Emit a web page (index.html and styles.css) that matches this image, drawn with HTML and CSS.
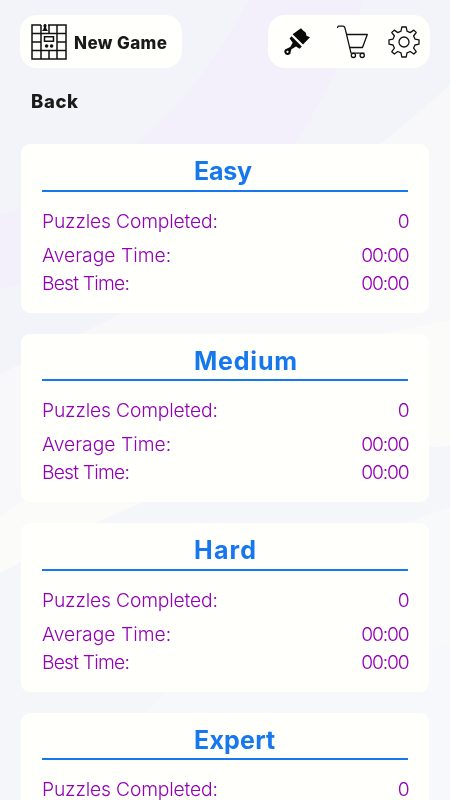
FILE: index.html
```html
<!DOCTYPE html>
<html lang="en">
<head>
    <meta charset="UTF-8">
    <meta name="viewport" content="width=device-width, initial-scale=1.0">
    <title>Statistics</title>
    <link rel="stylesheet" href="styles.css">
</head>
<body>
    <svg class="background" viewBox="0 0 450 800" preserveAspectRatio="none" aria-hidden="true">
        <rect width="450" height="800" fill="#f3f4f9"/>
        <path d="M248 0H363Q341 75 295 143Q190 260 0 289V215Q75 190 135 144Q205 85 248 0Z" fill="#f3f0fb"/>
        <path d="M450 85Q270 245 80 334Q40 355 0 374V800H450Z" fill="#f8f8fa"/>
        <path d="M450 320L385 334Q180 420 20 503L0 517V800H450Z" fill="#fbfcf9"/>
        <path d="M450 446L430 447Q280 460 143 502L95 523L0 573V800H450Z" fill="#f5f6fa"/>
        <path d="M450 507L405 523Q250 575 165 692L148 712L80 800H450Z" fill="#f7f8fc"/>
        <path d="M450 507L405 523Q300 570 290 670L450 645Z" fill="#f8f9fb"/>
    </svg>

    <header class="top-bar">
        <button class="new-game">
            <svg width="36" height="36" viewBox="0 0 36 36" aria-hidden="true">
                <g fill="none" stroke="#111" stroke-width="1.5">
                    <path d="M10 1H1V35H35V1H17M1 9.5H35M1 18H10M26 18H35M1 26.5H35M10 1V35M26 1V35M18 1V9.5M18 26.5V35"/>
                    <path d="M13.5 12.7H22.5V17.2H13.5Z"/>
                </g>
                <path d="M14 0A1.7 1.7 0 0 1 15 3L15.5 5L17 7H11L12.5 5L13 3A1.7 1.7 0 0 1 14 0Z" fill="#111"/>
                <circle cx="15.6" cy="22" r="1.8" fill="#111"/>
                <circle cx="20.6" cy="22" r="1.8" fill="#111"/>
            </svg>
            <span>New Game</span>
        </button>
        <nav class="tools">
            <svg class="brush" width="28" height="28" viewBox="0 0 28 28" aria-label="Themes">
                <path d="M9.6 6.2L18 0.2L20.4 2.7L22.7 4.5L23.5 7.8L27 9.2L20 16.5Z" fill="#0a0a0a"/>
                <path d="M8.5 8.3L18.8 18.4L16.6 20.7L13 18.4L8.4 21.2L7.7 23.5A3.2 3.2 0 1 1 3.6 20.8L7.2 19L9.7 14.8L6.6 10.4Z" fill="#0a0a0a"/>
                <circle cx="4.5" cy="23.8" r="1.1" fill="#fffffc"/>
            </svg>
            <svg class="cart" width="34" height="34" viewBox="0 0 34 34" aria-label="Shop">
                <g fill="none" stroke="#111" stroke-width="1.3" stroke-linecap="round" stroke-linejoin="round">
                    <path d="M1.5 2.5L2.2 1.2H7Q8.4 1.2 9 3.2L15 28.2H28"/>
                    <path d="M11.2 9.5H31.3L26.5 22.5H14"/>
                    <circle cx="17.4" cy="30.4" r="2.1"/>
                    <circle cx="26.2" cy="30.4" r="2.1"/>
                </g>
            </svg>
            <svg class="gear" width="32" height="32" viewBox="0 0 32 32" aria-label="Settings">
                <g fill="none" stroke="#111" stroke-width="1.3" stroke-linejoin="round">
                    <path d="M13.8 1H18.2L19 5.2L22.2 6.6L25.8 4.1L28.2 6.5L25.6 10L27 13.1L31 13.8V18.2L27 19L25.6 22.1L28.2 25.7L25.8 28L22.2 25.5L19 26.8L18.2 31H13.8L13 26.8L9.8 25.5L6.3 28L3.8 25.7L6.4 22.1L5 19L1 18.2V13.8L5 13.1L6.4 10L3.8 6.5L6.3 4.1L9.8 6.6L13 5.2Z"/>
                    <circle cx="16" cy="16" r="5"/>
                </g>
            </svg>
        </nav>
    </header>

    <a class="back">Back</a>

    <main class="stats">
        <section class="card">
            <h2 class="easy">Easy</h2>
            <p class="row completed"><span>Puzzles Completed:</span><span class="value">0</span></p>
            <p class="row average"><span>Average Time:</span><span class="value">00:00</span></p>
            <p class="row best"><span>Best Time:</span><span class="value">00:00</span></p>
        </section>
        <section class="card">
            <h2>Medium</h2>
            <p class="row completed"><span>Puzzles Completed:</span><span class="value">0</span></p>
            <p class="row average"><span>Average Time:</span><span class="value">00:00</span></p>
            <p class="row best"><span>Best Time:</span><span class="value">00:00</span></p>
        </section>
        <section class="card">
            <h2 class="hard">Hard</h2>
            <p class="row completed"><span>Puzzles Completed:</span><span class="value">0</span></p>
            <p class="row average"><span>Average Time:</span><span class="value">00:00</span></p>
            <p class="row best"><span>Best Time:</span><span class="value">00:00</span></p>
        </section>
        <section class="card">
            <h2 class="expert">Expert</h2>
            <p class="row completed"><span>Puzzles Completed:</span><span class="value">0</span></p>
        </section>
    </main>
</body>
</html>
```

FILE: styles.css
```css
* {
    box-sizing: border-box;
}

body {
    margin: 0;
    height: 100vh;
    overflow: hidden;
    display: flex;
    flex-direction: column;
    font-family: Inter, "Liberation Sans", sans-serif;
    color: #1a1a1a;
}

.background {
    position: fixed;
    inset: 0;
    width: 100%;
    height: 100%;
    z-index: -1;
}

.top-bar {
    display: flex;
    justify-content: space-between;
    padding: 15px 20px 0;
}

.new-game,
.tools {
    display: flex;
    align-items: center;
    width: 162px;
    height: 53px;
    border: none;
    border-radius: 17px;
    background: #fffffc;
}

.new-game {
    gap: 7px;
    padding: 0 0 0 11px;
    font-family: inherit;
    font-size: 17px;
    font-weight: 800;
    color: #1a1a1a;
    white-space: nowrap;
}

.new-game span {
    padding-top: 3px;
    letter-spacing: 0.4px;
}

.tools {
    padding-left: 15px;
}

.cart {
    margin-left: 25px;
}

.gear {
    margin-left: 18px;
}

.back {
    margin: 19px 0 0 31px;
    height: 29px;
    line-height: 29px;
    font-size: 18.5px;
    font-weight: 800;
    letter-spacing: 0.6px;
}

.stats {
    flex: 1;
    min-height: 0;
    overflow: hidden;
    display: flex;
    flex-direction: column;
    gap: 21px;
    padding: 28px 21px 0;
}

.card {
    flex: none;
    height: 168.6px;
    padding: 8px 21px 0;
    border-radius: 9px;
    background: #fffffc;
}

.card h2 {
    height: 39.6px;
    margin: 0;
    padding-left: 152px;
    border-bottom: 2px solid #1677ee;
    line-height: 39px;
    font-size: 25px;
    font-weight: 700;
    letter-spacing: 0.8px;
    color: #1677ee;
}

.card .easy {
    letter-spacing: -0.2px;
}

.card .hard {
    letter-spacing: 1.2px;
}

.card .expert {
    letter-spacing: 0.2px;
}

.row {
    display: flex;
    justify-content: space-between;
    margin: 0;
    height: 28px;
    line-height: 28px;
    font-size: 19.3px;
    font-weight: 300;
    color: #9400b8;
}

.completed {
    margin: 15px 0 6px;
    letter-spacing: -0.17px;
}

.best {
    letter-spacing: -0.8px;
}

.value {
    letter-spacing: -1.2px;
    margin-right: -0.4px;
}
```
